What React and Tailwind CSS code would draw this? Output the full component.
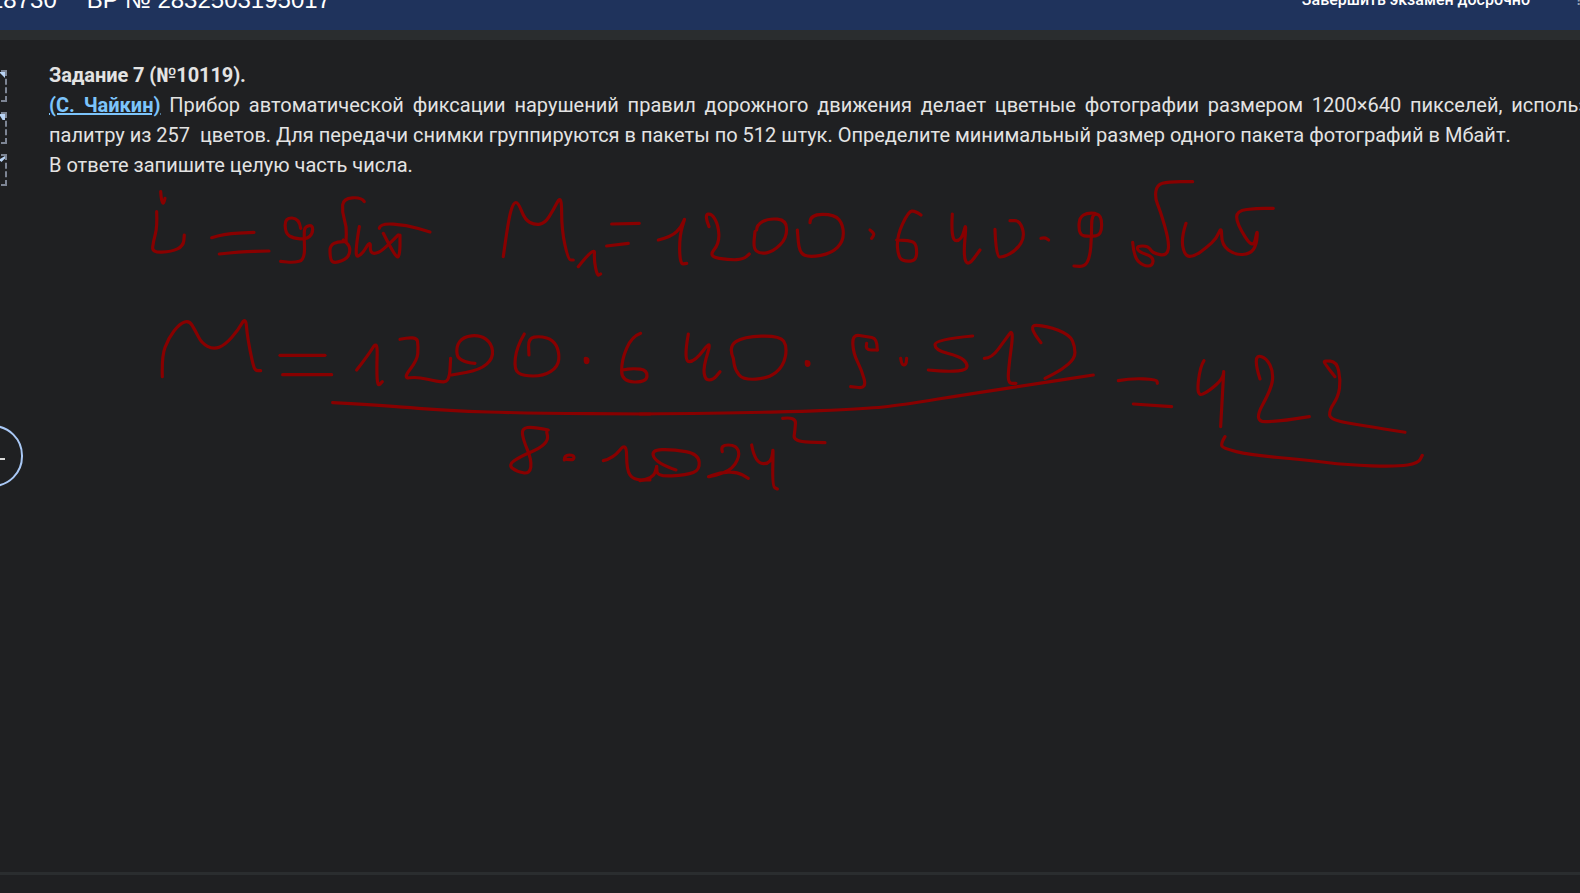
const smooth = (pts) => {
  const p = pts.trim().split(/\s+/).map(Number)
  let d = `M${p[0]} ${p[1]}`
  for (let i = 2; i < p.length - 2; i += 2) {
    const mx = (p[i] + p[i + 2]) / 2
    const my = (p[i + 1] + p[i + 3]) / 2
    d += ` Q${p[i]} ${p[i + 1]} ${mx} ${my}`
  }
  d += ` L${p[p.length - 2]} ${p[p.length - 1]}`
  return d
}

// handwriting, points in 3x crop coordinates
const inkLeft = [
  '92 65 94 90 100 103 105 85',
  '80 125 82 170 70 215 66 248 125 245 160 228 163 195',
  '245 203 280 192 372 187',
  '268 252 330 245 417 243',
  '512 175 508 145 465 143 466 190 490 205 530 208 548 190 548 165 525 170 522 190 525 270 490 278 452 274',
  '703 95 695 82 640 85 636 125 650 170 648 215',
  '648 215 600 212 600 270 615 280 655 265 662 230 640 210',
  '688 170 672 262 695 255 722 210 720 250 745 250 775 225 805 195',
  '748 175 750 160 830 165 900 186',
  '760 190 800 270 810 250 810 195',
  '1120 260 1135 150 1150 98 1165 97 1185 150 1215 165 1245 160 1270 120 1295 72 1295 180 1315 270 1330 270',
  '1345 290 1395 228 1392 270 1402 318 1412 312',
  '1445 162 1528 160',
  '1430 228 1495 220',
  '97 620 95 560 115 505 150 460 178 452 195 480 215 520 250 538 285 525 325 480 347 440 352 500 370 590 378 602 392 602',
  '450 556 585 556',
  '458 614 605 614',
  '680 600 715 555 743 510 740 600 743 650 757 635',
  '810 508 860 497 865 530 862 570 818 627 860 620 925 636 958 635 962 565',
  '1035 580 985 575 978 530 1000 500 1050 495 1085 520 1090 565 1050 600 965 615',
  '1183 492 1160 530 1152 600 1180 618 1240 618 1285 590 1288 545 1270 510 1230 498 1195 505 1197 555',
  '1366 565 1374 565 1374 578 1366 578 1366 565',
  '1532 490 1505 500 1475 570 1475 635 1550 637 1552 600 1510 595 1478 600',
  '608 698 780 708 950 722 1200 730 1560 732',
  '1255 780 1210 770 1175 775 1180 810 1205 870 1200 912 1160 905 1135 885 1170 860 1230 835 1255 810 1250 785',
  '1303 870 1303 855 1332 855 1332 870 1310 868',
  '1420 872 1450 865 1490 815 1490 900 1510 930 1560 930',
]

const inkMiddle = [
  '0 732 400 728 680 716 780 706 1000 670 1200 640 1360 615',
  '0 932 40 925 50 890',
  '55 210 95 200 125 170 137 137 118 200 120 283 140 280',
  '207 170 193 135 215 130 235 165 238 220 205 260 270 270 310 268 328 252',
  '350 180 350 165 385 145 440 150 440 205 400 245 360 252 340 235 345 185',
  '510 158 510 133 585 133 610 165 610 215 575 250 510 262 478 250 472 180',
  '690 180 705 190 695 205',
  '843 135 825 122 805 125 770 200 775 265 800 275 830 270 830 225 815 212 770 210',
  '937 132 932 212 965 212 980 150 970 260 985 288 1020 240',
  '1065 178 1068 260 1090 262 1130 240 1155 200 1140 152 1110 152',
  '1203 205 1215 202 1226 210',
  '1365 130 1320 125 1315 195 1350 200 1385 195 1385 135 1355 130 1355 200 1350 260 1335 290 1302 288',
  '145 492 130 575 165 575 217 505 190 590 195 630 220 630 240 605',
  '280 565 265 530 310 500 420 497 442 530 430 590 385 625 310 630 285 600 280 565',
  '499 575 507 575 507 586 499 586 499 575',
  '712 540 712 505 680 500 637 493 640 550 665 600 680 655 632 650',
  '680 520 675 540 712 540',
  '782 565 785 585 798 585 800 565',
  '998 498 885 508 885 540 960 560 982 580 980 600 930 605 865 600',
  '1033 565 1055 565 1095 510 1122 473 1105 600 1105 640 1128 640',
  '1203 518 1160 465 1220 467 1290 495 1305 530 1305 565 1265 600 1215 625',
  '428 745 468 740 465 780 460 815 555 818',
  '108 900 50 880 32 840 100 838 175 852 180 900 140 915 52 920 50 890',
  '247 845 240 825 290 825 300 860 270 905 190 925 240 908 290 905 325 925',
  '335 825 345 880 395 882 400 820 397 950 412 957',
]

const inkRight = [
  '158 217 162 262 190 288 218 288 220 260 175 245 170 228 205 228 218 250 262 258 268 215 240 120 225 85 230 45 265 35 338 35',
  '318 160 303 205 315 260 345 258 380 232 410 205 425 168 425 225 465 255 510 252 530 225 533 172 520 240 470 160 470 122 530 115 580 115',
  '115 632 150 625 230 628 232 640',
  '160 702 275 710',
  '372 572 360 590 350 680 385 665 430 625 432 590 422 770',
  '540 627 528 590 530 555 560 565 580 605 575 655 520 755 590 755 688 740',
  '765 620 733 580 733 572 770 575 782 630 775 680 748 720 750 750 850 767 975 787',
  '435 800 423 820 428 835 510 855 680 870 800 885 950 890 1015 880 1027 856',
]

function Handwriting() {
  const groups = [
    { key: 'left', at: 'translate(130 170) scale(0.3333)', lines: inkLeft },
    { key: 'middle', at: 'translate(640 170) scale(0.3333)', lines: inkMiddle },
    { key: 'right', at: 'translate(1080 170) scale(0.3333)', lines: inkRight },
  ]
  return (
    <svg className="absolute left-0 top-0 pointer-events-none" width="1580" height="893" fill="none" stroke="#880000" strokeWidth="9.5" strokeLinecap="round" strokeLinejoin="round">
      {groups.map((g) => (
        <g key={g.key} transform={g.at}>
          {g.lines.map((pts, i) => (
            <path key={i} d={smooth(pts)} />
          ))}
        </g>
      ))}
    </svg>
  )
}

function ToolBox({ mark }) {
  return (
    <div className="relative w-[34px] h-[32px] -ml-[27px] border-2 border-dashed border-[#7d8594]">
      <span className="absolute right-0 top-0 w-[6px] h-[6px] bg-[#b9d4f5]" style={{ clipPath: mark }} />
    </div>
  )
}

export default function App() {
  return (
    <div className="relative w-[1580px] h-[893px] overflow-hidden flex flex-col bg-[#1f2022] font-['Roboto',sans-serif]">
      {/* Top bar, scrolled off the page */}
      <header className="h-[30px] shrink-0 bg-[#1f335c] text-white overflow-hidden flex justify-between">
        <div className="-mt-[16px] -ml-[10px] font-['Liberation_Sans',sans-serif] text-[24px] leading-[32px] whitespace-pre">
          <span>18730</span>
          <span className="ml-[30px]">BP № 2832503195017</span>
        </div>
        <div className="-mt-[10px] flex text-[16px] font-medium leading-[20px]">
          <span className="mr-[45px]">Завершить экзамен досрочно</span>
          <span className="w-[5px] overflow-hidden text-[#9aa7bd]">?</span>
        </div>
      </header>
      <div className="h-[10px] shrink-0 bg-[#2a2d2f]" />

      <main className="flex-1 flex min-h-0">
        <aside className="w-[49px] shrink-0 pt-[30px] flex flex-col gap-[10px]">
          <ToolBox mark="polygon(0 0,100% 0,100% 100%)" />
          <ToolBox mark="polygon(0 0,100% 0,100% 100%,60% 100%)" />
          <ToolBox mark="polygon(100% 0,100% 40%,40% 100%,0 60%)" />
        </aside>
        <section className="w-[1560px] shrink-0 pt-[20px] text-[#e3e3e3] text-[20px] leading-[30px]">
          <p className="font-bold tracking-[-0.1px]">Задание 7 (№10119).</p>
          <p className="text-justify">
            <a className="font-bold text-[#7cc4fb] underline">(С. Чайкин)</a> Прибор автоматической фиксации нарушений правил дорожного движения делает цветные фотографии размером 1200×640 пикселей, используя палитру из 257{'\u00a0'} цветов. Для передачи снимки группируются в пакеты по 512 штук. Определите минимальный размер одного пакета фотографий в Мбайт.
          </p>
          <p>В ответе запишите целую часть числа.</p>
        </section>
      </main>

      <div className="h-[3px] shrink-0 bg-[#2a2d2f]" />
      <div className="h-[18px] shrink-0" />

      {/* Side tool button, half hidden */}
      <button className="absolute -left-[38px] top-[425px] w-[61px] h-[62px] rounded-full border-2 border-[#a9c8f5] flex items-center justify-center">
        <span className="block w-[11px] h-[2px] bg-[#d9d9d9] ml-[14px] mt-[6px]" />
      </button>

      <Handwriting />
    </div>
  )
}
